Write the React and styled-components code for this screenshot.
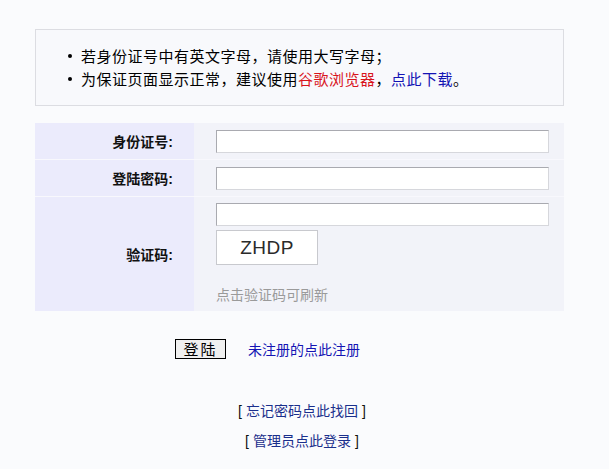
import React from 'react';
import styled, { createGlobalStyle } from 'styled-components';

const GlobalStyle = createGlobalStyle`
    html, body {
        margin: 0;
        padding: 0;
        background: #fafbfd;
        font-family: "Liberation Sans", "Noto Sans CJK SC", sans-serif;
        font-size: 14px;
        color: #000;
    }
`;

const Page = styled.div`
    width: 609px;
    padding-top: 29px;
    padding-left: 35px;
    box-sizing: border-box;
`;

const Notice = styled.div`
    width: 529px;
    height: 77px;
    box-sizing: border-box;
    border: 1px solid #dcdde2;
    background: #f8f9fc;
    padding: 14px 0 0 30px;

    ul {
        margin: 0;
        padding: 0;
        list-style: none;
    }

    li {
        position: relative;
        padding-left: 15px;
        font-family: "Noto Sans CJK SC", sans-serif;
        font-size: 15px;
        line-height: 23px;
        letter-spacing: 0.5px;
    }

    li::before {
        content: '';
        position: absolute;
        left: 2px;
        top: 10px;
        width: 4px;
        height: 4px;
        border-radius: 50%;
        background: #000;
    }
`;

const Red = styled.span`
    color: #d8141c;
`;

const Blue = styled.a`
    color: #1414b4;
    text-decoration: none;
`;

const Form = styled.div`
    margin-top: 17px;
    width: 529px;
    display: grid;
    grid-template-columns: 159px 1fr;
    grid-template-rows: 36px 36px 114px;
    row-gap: 1px;
    background: #f8f8fd;
`;

const Label = styled.div`
    background: #ebebfc;
    display: flex;
    align-items: center;
    justify-content: flex-end;
    padding-right: 21px;
    font-weight: bold;
    font-size: 14px;
    color: #111;
`;

const Field = styled.div`
    background: #f2f3f9;
    padding: ${p => (p.$tall ? '6px' : '7px')} 0 0 22px;
    display: flex;
    flex-direction: column;
    align-items: flex-start;
`;

const Input = styled.input`
    width: 333px;
    height: 23px;
    box-sizing: border-box;
    border: 1px solid #a9aab0;
    border-bottom-color: #d6d7dc;
    border-right-color: #d6d7dc;
    background: #fff;
    margin: 0;
    outline: none;
`;

const Captcha = styled.div`
    margin-top: 4px;
    width: 102px;
    height: 35px;
    box-sizing: border-box;
    border: 1px solid #c8c9ce;
    background: #fff;
    display: flex;
    align-items: center;
    justify-content: center;
    font-family: "Liberation Sans", Arial, sans-serif;
    font-size: 19px;
    color: #2a2a2a;
    letter-spacing: 0.5px;
`;

const Hint = styled.div`
    margin-top: 19px;
    color: #9a9a9a;
    font-size: 14px;
`;

const Actions = styled.div`
    margin-top: 28px;
    width: 529px;
    display: flex;
    align-items: center;
    padding-left: 140px;
    box-sizing: border-box;
    gap: 22px;
`;

const Button = styled.button`
    width: 51px;
    height: 20px;
    padding: 0;
    border: 1px solid #000;
    background: #f0f0f0;
    font-family: "Noto Sans CJK SC", sans-serif;
    font-size: 15px;
    letter-spacing: 2px;
    line-height: 18px;
    color: #000;
`;

const Links = styled.div`
    margin-top: 41px;
    width: 529px;
    display: flex;
    flex-direction: column;
    align-items: center;
    gap: 8px;
`;

const LinkLine = styled.div`
    line-height: 22px;
    font-size: 14px;
    color: #111;
    padding-left: 5px;

    a {
        color: #1a2f8c;
        text-decoration: none;
        margin: 0 4px;
    }
`;

export default function App() {
    return (
        <>
            <GlobalStyle />
            <Page>
                <Notice>
                    <ul>
                        <li>若身份证号中有英文字母，请使用大写字母；</li>
                        <li>
                            为保证页面显示正常，建议使用<Red>谷歌浏览器</Red>，<Blue href="#">点此下载</Blue>。
                        </li>
                    </ul>
                </Notice>
                <Form>
                    <Label>身份证号:</Label>
                    <Field>
                        <Input type="text" />
                    </Field>
                    <Label>登陆密码:</Label>
                    <Field>
                        <Input type="password" />
                    </Field>
                    <Label>验证码:</Label>
                    <Field $tall>
                        <Input type="text" />
                        <Captcha>ZHDP</Captcha>
                        <Hint>点击验证码可刷新</Hint>
                    </Field>
                </Form>
                <Actions>
                    <Button>登陆</Button>
                    <Blue href="#">未注册的点此注册</Blue>
                </Actions>
                <Links>
                    <LinkLine>[<a href="#">忘记密码点此找回</a>]</LinkLine>
                    <LinkLine>[<a href="#">管理员点此登录</a>]</LinkLine>
                </Links>
            </Page>
        </>
    );
}
